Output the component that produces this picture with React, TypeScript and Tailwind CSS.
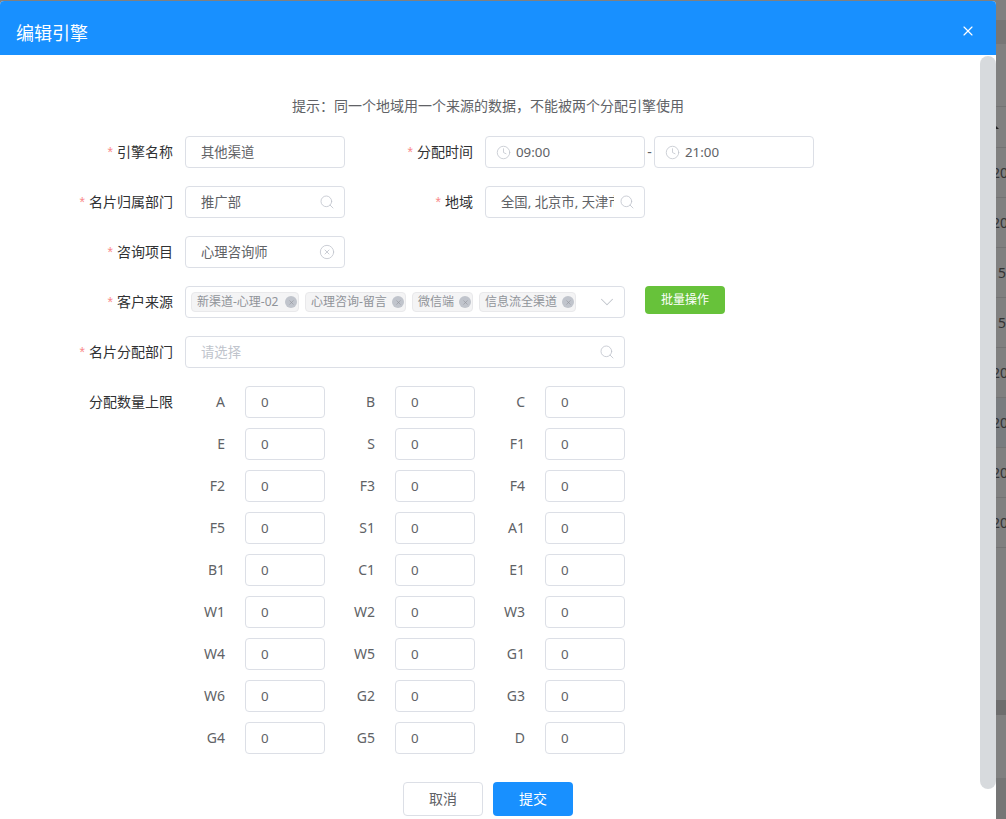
import { Clock, Search, ChevronDown, X, CircleX } from "lucide-react";

const inputBox = "h-8 pt-[2px] border border-[#dcdfe6] rounded bg-white flex items-center text-[13.33px] text-[#606266] [&>svg]:-translate-y-px";

const Label = ({ text, required = true, width = "w-[173px]" }: { text: string; required?: boolean; width?: string }) => (
  <label className={`${width} shrink-0 text-right text-sm leading-8 text-[#303133]`}>
    {required && <span className="text-[#f98a8a] mr-1 font-['Liberation_Sans']">*</span>}
    {text}
  </label>
);

const tags = [
  { text: "新渠道-心理-02", w: "w-[108px]" },
  { text: "心理咨询-留言", w: "w-[101px]" },
  { text: "微信端", w: "w-[61px]" },
  { text: "信息流全渠道", w: "w-[97px]" },
];

const limits = ["A", "B", "C", "E", "S", "F1", "F2", "F3", "F4", "F5", "S1", "A1", "B1", "C1", "E1", "W1", "W2", "W3", "W4", "W5", "G1", "W6", "G2", "G3", "G4", "G5", "D"];

const Tag = ({ text, w }: { text: string; w: string }) => (
  <span className={`${w} h-5 shrink-0 flex items-center justify-between pl-[5px] pr-px bg-[#f4f4f5] border border-[#e9e9eb] rounded text-xs text-[#909399] -translate-y-px`}>
    <span className="whitespace-nowrap">{text}</span>
    <span className="w-3 h-3 rounded-full bg-[#c0c4cc] flex items-center justify-center shrink-0">
      <X size={7} className="text-[#909399]" strokeWidth={2} />
    </span>
  </span>
);

const LimitCell = ({ name }: { name: string }) => (
  <div className="flex items-center w-[140px]">
    <span className="w-[60px] pr-5 text-right text-sm text-[#606266]">{name}</span>
    <div className={`${inputBox} w-20 pl-[15px]`}>0</div>
  </div>
);

// the table behind the dialog, only a sliver shows
const backRows = [
  { h: "h-[50px]", text: "20", bg: "" },
  { h: "h-[50px]", text: "20", bg: "" },
  { h: "h-[50px]", text: "5", bg: "" },
  { h: "h-[50px]", text: "5", bg: "" },
  { h: "h-[50px]", text: "20", bg: "" },
  { h: "h-[50px]", text: "20", bg: "bg-[#797c7f]" },
  { h: "h-[50px]", text: "20", bg: "" },
  { h: "h-[50px]", text: "20", bg: "" },
];

export default function App() {
  return (
    <div className="w-[1006px] h-[819px] overflow-hidden flex bg-[#808080] font-['Noto_Sans','Noto_Sans_CJK_SC',sans-serif]">
      {/* dialog */}
      <main className="w-[996px] h-[819px] mt-px rounded-t-sm bg-white flex flex-col shrink-0">
        <header className="h-[54px] shrink-0 bg-[#1890ff] flex items-center justify-between pl-4 pr-[20px] rounded-t-sm">
          <h1 className="text-lg text-white pt-[9px]">编辑引擎</h1>
          <span className="pt-[5px]">
            <X size={16} className="text-white" strokeWidth={1.75} />
          </span>
        </header>

        <div className="flex flex-1 min-h-0">
          <div className="w-[980px] shrink-0 pt-[41px]">
            <p className="w-[976px] text-center text-sm leading-5 text-[#606266]">
              {"提示\uFF1A同一个地域用一个来源的数据\uFF0C不能被两个分配引擎使用"}
            </p>

            <div className="mt-[20px] flex flex-col gap-[18px]">
              <div className="flex">
                <Label text="引擎名称" />
                <div className={`${inputBox} w-40 ml-3 pl-[15px]`}>其他渠道</div>
                <Label text="分配时间" width="w-[128px]" />
                <div className={`${inputBox} w-40 ml-3 pl-[10px] gap-[5px]`}>
                  <Clock size={15} className="text-[#c0c4cc]" strokeWidth={1.25} />
                  09:00
                </div>
                <span className="w-[9px] text-center text-sm leading-8 text-[#606266]">-</span>
                <div className={`${inputBox} w-40 pl-[10px] gap-[5px]`}>
                  <Clock size={15} className="text-[#c0c4cc]" strokeWidth={1.25} />
                  21:00
                </div>
              </div>

              <div className="flex">
                <Label text="名片归属部门" />
                <div className={`${inputBox} w-40 ml-3 pl-[15px] pr-[9px] justify-between`}>
                  推广部
                  <Search size={16} className="text-[#c0c4cc]" strokeWidth={1.25} />
                </div>
                <Label text="地域" width="w-[128px]" />
                <div className={`${inputBox} w-40 ml-3 pl-[15px] pr-[9px] justify-between`}>
                  <span className="w-[113px] overflow-hidden whitespace-nowrap">全国, 北京市, 天津市</span>
                  <Search size={16} className="text-[#c0c4cc]" strokeWidth={1.25} />
                </div>
              </div>

              <div className="flex">
                <Label text="咨询项目" />
                <div className={`${inputBox} w-40 ml-3 pl-[15px] pr-[9px] justify-between`}>
                  心理咨询师
                  <CircleX size={16} className="text-[#c0c4cc]" strokeWidth={1.25} />
                </div>
              </div>

              <div className="flex">
                <Label text="客户来源" />
                <div className={`${inputBox} w-[440px] ml-3 pl-[5px] pr-[6px] gap-[6px]`}>
                  {tags.map((t) => (
                    <Tag key={t.text} text={t.text} w={t.w} />
                  ))}
                  <ChevronDown size={22} className="text-[#c0c4cc] ml-auto" strokeWidth={1.1} />
                </div>
                <button className="ml-5 w-20 h-7 rounded bg-[#67c23a] text-xs text-white">批量操作</button>
              </div>

              <div className="flex">
                <Label text="名片分配部门" />
                <div className={`${inputBox} w-[440px] ml-3 pl-[15px] pr-[9px] justify-between text-[#c0c4cc]`}>
                  请选择
                  <Search size={16} className="text-[#c0c4cc]" strokeWidth={1.25} />
                </div>
              </div>

              <div className="flex">
                <Label text="分配数量上限" required={false} />
                <div className="ml-3 grid grid-cols-[140px_140px_140px] gap-x-[10px] gap-y-[10px]">
                  {limits.map((name) => (
                    <LimitCell key={name} name={name} />
                  ))}
                </div>
              </div>
            </div>

            <div className="mt-7 ml-[403px] flex gap-[10px]">
              <button className="w-20 h-[34px] rounded border border-[#dcdfe6] bg-white text-sm text-[#606266]">取消</button>
              <button className="w-20 h-[34px] rounded bg-[#1890ff] text-sm text-white">提交</button>
            </div>
          </div>

          {/* scroll bar */}
          <div className="w-4 h-[733px] mt-px rounded-lg bg-[#d7dadd]" />
        </div>
      </main>

      {/* sliver of the page behind the overlay */}
      <div className="w-[10px] shrink-0 overflow-hidden flex flex-col">
        <div className="h-5 shrink-0" />
        <div className="h-6 shrink-0 bg-[#767676]" />
        <div className="h-[63px] shrink-0 border-b border-[#737373]" />
        <div className="h-[41px] shrink-0 border-b border-[#737373] flex items-center">
          <svg width="4" height="3" viewBox="0 0 4 3" className="text-[#222]">
            <path d="M0 0 L3 3 L0 3 Z" fill="currentColor" />
          </svg>
        </div>
        {backRows.map((r, i) => (
          <div key={i} className={`${r.h} ${r.bg} shrink-0 border-b border-[#737373] flex items-center pt-px text-sm text-[#333] whitespace-nowrap ${r.text === "5" ? "pl-[2px]" : "-ml-1"}`}>
            {r.text}
          </div>
        ))}
        <div className="h-[152px] shrink-0" />
        <div className="h-[15px] shrink-0 bg-[#6d6d6d]" />
        <div className="h-[63px] shrink-0" />
        <div className="flex-1 bg-[#767676]" />
      </div>
    </div>
  );
}
